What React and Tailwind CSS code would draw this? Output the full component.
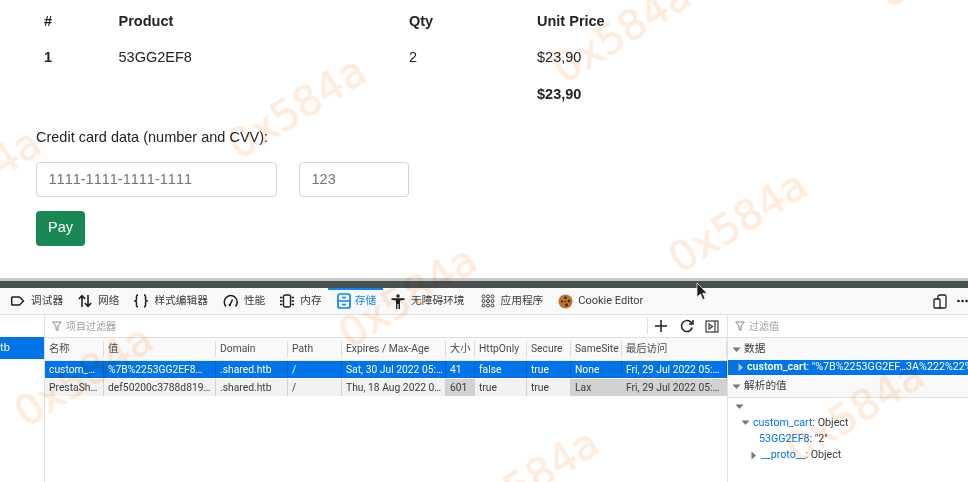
const columns = [
  { name: '名称', width: 'w-[59px]' },
  { name: '值', width: 'w-[112px]' },
  { name: 'Domain', width: 'w-[72px]' },
  { name: 'Path', width: 'w-[54px]' },
  { name: 'Expires / Max-Age', width: 'w-[104px]' },
  { name: '大小', width: 'w-[29px]' },
  { name: 'HttpOnly', width: 'w-[52px]' },
  { name: 'Secure', width: 'w-[44px]' },
  { name: 'SameSite', width: 'w-[51px]' },
  { name: '最后访问', width: 'w-[105px]' },
];

const cookies = [
  ['custom_…', '%7B%2253GG2EF8…', '.shared.htb', '/', 'Sat, 30 Jul 2022 05:…', '41', 'false', 'true', 'None', 'Fri, 29 Jul 2022 05:…'],
  ['PrestaSh…', 'def50200c3788d819…', '.shared.htb', '/', 'Thu, 18 Aug 2022 0…', '601', 'true', 'true', 'Lax', 'Fri, 29 Jul 2022 05:…'],
];

const watermarks = [
  'left-[-28px] top-[180px]',
  'left-[84px] top-[376px]',
  'left-[297px] top-[108px]',
  'left-[408px] top-[297px]',
  'left-[622px] top-[32px]',
  'left-[738px] top-[222px]',
  'left-[855px] top-[412px]',
  'left-[530px] top-[480px]',
  'left-[947px] top-[-43px]',
];

function DebuggerIcon() {
  return (
    <svg className="shrink-0" width="14" height="14" viewBox="0 0 14 14" fill="none" stroke="#1f1f22" strokeWidth="1.5">
      <path d="M1.5 3h7l4 4-4 4h-7a.8.8 0 0 1-.8-.8V3.800A.8.8 0 0 1 1.500 3z" strokeLinejoin="round" />
    </svg>
  );
}

function NetworkIcon() {
  return (
    <svg className="shrink-0" width="14" height="14" viewBox="0 0 14 14" fill="none" stroke="#1f1f22" strokeWidth="1.6">
      <path d="M4 13V2M.8 5 4 1.600 7.200 5M10 1v11M6.800 9l3.200 3.400L13.200 9" />
    </svg>
  );
}

function StyleIcon() {
  return (
    <svg className="shrink-0" width="14" height="14" viewBox="0 0 14 14" fill="none" stroke="#1f1f22" strokeWidth="1.5">
      <path d="M4 1C2 1 2.500 3 2.500 5S2 6.500 1 7c1 .5 1.500 0 1.500 2S2 13 4 13M10 1c2 0 1.500 2 1.500 4S12 6.500 13 7c-1 .5-1.500 0-1.500 2s.5 4-1.500 4" />
    </svg>
  );
}

function GaugeIcon() {
  return (
    <svg className="shrink-0" width="15" height="14" viewBox="0 0 15 14" fill="none" stroke="#1f1f22" strokeWidth="1.5">
      <path d="M3 12.500A6.500 6.500 0 1 1 12.500 12.500" />
      <path d="M7 11 9.500 5.500" />
      <circle cx="6.800" cy="11" r="1.200" fill="#1f1f22" stroke="none" />
    </svg>
  );
}

function MemoryIcon() {
  return (
    <svg className="shrink-0" width="14" height="14" viewBox="0 0 14 14" fill="none" stroke="#1f1f22" strokeWidth="1.300">
      <rect x="3.500" y="1" width="7" height="12" rx="1.500" />
      <path d="M0 3.500h2.500M0 7h2.500M0 10.500h2.500M11.500 3.500H14M11.500 7H14M11.500 10.500H14" />
    </svg>
  );
}

function StorageIcon() {
  return (
    <svg className="shrink-0" width="14" height="16" viewBox="0 0 14 16" fill="none" stroke="#0a84ff" strokeWidth="1.700">
      <rect x="1" y="1" width="12" height="14" rx="2" />
      <path d="M1 8h12M5 4.500h4M5 11.500h4" />
    </svg>
  );
}

function AccessibilityIcon() {
  return (
    <svg className="shrink-0" width="14" height="15" viewBox="0 0 14 15" fill="#1f1f22">
      <circle cx="7" cy="2" r="1.700" />
      <path d="M.5 4.300h13v1.500L9 6.500V15H7.600v-5h-1.200v5H5V6.500L.5 5.800z" />
    </svg>
  );
}

function AppsIcon() {
  const dots = [];
  for (const x of [2.5, 7, 11.5]) {
    for (const y of [2.5, 7, 11.5]) dots.push(<circle key={`${x}-${y}`} cx={x} cy={y} r="1.500" />);
  }
  return (
    <svg className="shrink-0" width="14" height="14" viewBox="0 0 14 14" fill="none" stroke="#3b3b3f" strokeWidth="1">
      {dots}
    </svg>
  );
}

function CookieIcon() {
  return (
    <svg className="shrink-0" width="15" height="15" viewBox="0 0 15 15">
      <circle cx="7.500" cy="7.500" r="7" fill="#b9762e" />
      <circle cx="7.500" cy="3.800" r="1.300" fill="#3a2413" />
      <circle cx="11" cy="7" r="1.300" fill="#3a2413" />
      <circle cx="4" cy="7.500" r="1.100" fill="#3a2413" />
      <circle cx="8.500" cy="11" r="1.400" fill="#3a2413" />
      <circle cx="7.300" cy="7.500" r=".8" fill="#3a2413" />
    </svg>
  );
}

function FilterIcon() {
  return (
    <svg className="shrink-0" width="10" height="11" viewBox="0 0 10 11" fill="none" stroke="#8a8a8e" strokeWidth="1">
      <path d="M.7 1h8.600L6 5v4.500L4 8.500V5z" />
    </svg>
  );
}

function Arrow({ open, color = '#77777c' }) {
  return (
    <svg className="shrink-0" width="9" height="9" viewBox="0 0 9 9" fill={color}>
      {open ? <path d="M.5 2.500h8L4.500 7z" /> : <path d="M2.500.5v8L7 4.500z" />}
    </svg>
  );
}

function Tab({ icon, label, active, latin, className = 'gap-[6px]' }) {
  return (
    <div className={`flex items-center h-full shrink-0 ${className}`}>
      {icon}
      <span className={`${latin ? 'text-[11px]' : 'text-[10.7px]'} ${active ? 'text-[#0a84ff]' : 'text-[#3b3b3f]'}`}>{label}</span>
    </div>
  );
}

function CookieTable() {
  return (
    <div className="flex-1 min-w-0 text-[10.3px]">
      <div className="flex h-[23px] bg-[#f9f9fa] border-b border-[#e8e8e8] items-center">
        {columns.map((col) => (
          <div key={col.name} className={`${col.width} shrink-0 h-[16px] leading-[16px] pl-[4px] border-r border-[#dcdcdc] text-[#4a4a4f] whitespace-nowrap overflow-hidden`}>
            {col.name}
          </div>
        ))}
      </div>
      {cookies.map((row, rowIndex) => (
        <div key={row[0]} className={`flex h-[18px] border-b border-white ${rowIndex === 0 ? 'bg-[#0074e8] text-white' : 'bg-[#f2f2f2] text-[#3b3b3f]'}`}>
          {row.map((cell, i) => {
            const sorted = rowIndex === 1 && (i === 5 || i === 8 || i === 9);
            return (
              <div
                key={i}
                className={`${columns[i].width} shrink-0 leading-[17px] pl-[4px] border-r whitespace-nowrap overflow-hidden ${rowIndex === 0 ? 'border-[#005fc2]' : 'border-[#d0d0d0]'} ${sorted ? 'bg-[#d2d2d2]' : ''}`}
              >
                {cell}
              </div>
            );
          })}
        </div>
      ))}
    </div>
  );
}

function SidePanel() {
  return (
    <div className="w-[241px] shrink-0 border-l border-[#e0e0e1] flex flex-col text-[10.7px]">
      <div className="h-[23px] flex items-center gap-[4px] pl-[7px] border-b border-[#e0e0e1] text-[#a0a0a4] shrink-0">
        <FilterIcon />
        <span className="text-[10px]">过滤值</span>
      </div>
      <div className="h-[22px] flex items-center gap-[3px] pl-[4px] bg-[#f9f9fa] text-[#3b3b3f] shrink-0">
        <Arrow open />
        <span>数据</span>
      </div>
      <div className="h-[15px] flex items-center gap-[2px] pl-[8px] bg-[#0074e8] text-white whitespace-nowrap overflow-hidden shrink-0">
        <Arrow color="#a9cdf5" />
        <span><b className="font-semibold">custom_cart</b>: "%7B%2253GG2EF…3A%222%22%7D"</span>
      </div>
      <div className="h-[23px] flex items-center gap-[3px] pl-[4px] bg-[#f9f9fa] border-b border-[#e0e0e1] text-[#3b3b3f] shrink-0">
        <Arrow open />
        <span>解析的值</span>
      </div>
      <div className="text-[#3b3b3f]">
        <div className="h-[16.4px] flex items-center pl-[7px]"><Arrow open /></div>
        <div className="h-[16.4px] flex items-center pl-[13px] gap-[3px]">
          <Arrow open />
          <span><span className="text-[#0074e8]">custom_cart</span>: Object</span>
        </div>
        <div className="h-[16.4px] flex items-center pl-[31px]">
          <span><span className="text-[#0074e8]">53GG2EF8</span>: "2"</span>
        </div>
        <div className="h-[16.4px] flex items-center pl-[21px] gap-[3px]">
          <Arrow />
          <span><span className="text-[#0074e8]">__proto__</span>: Object</span>
        </div>
      </div>
    </div>
  );
}

export default function App() {
  return (
    <div className="relative w-[968px] h-[482px] overflow-hidden bg-white">
      <div className="h-[278px] pt-[3.5px] px-[36px] font-['Liberation_Sans',sans-serif] text-[14.5px] text-[#212529]">
        <div className="grid grid-cols-[74.5px_290.5px_128px_1fr] auto-rows-[36.5px] items-center w-[650px]">
          <b className="pl-[8px]">#</b>
          <b className="pl-[8px]">Product</b>
          <b className="pl-[8px]">Qty</b>
          <b className="pl-[8px]">Unit Price</b>
          <b className="pl-[8px]">1</b>
          <span className="pl-[8px]">53GG2EF8</span>
          <span className="pl-[8px]">2</span>
          <span className="pl-[8px]">$23,90</span>
          <span />
          <span />
          <span />
          <b className="pl-[8px]">$23,90</b>
        </div>
        <div className="mt-[14.5px] leading-[19px]">Credit card data (number and CVV):</div>
        <div className="flex gap-[22px] mt-[15px]">
          <input readOnly placeholder="1111-1111-1111-1111" className="w-[241px] h-[35px] px-[11.5px] border border-[#ced4da] rounded-[4px] bg-transparent [font-kerning:none] placeholder:text-[#6c757d]" />
          <input readOnly placeholder="123" className="w-[110px] h-[35px] px-[11.5px] border border-[#ced4da] rounded-[4px] bg-transparent [font-kerning:none] placeholder:text-[#6c757d]" />
        </div>
        <button className="mt-[14px] block w-[49px] h-[35px] bg-[#198754] text-white rounded-[4px]">Pay</button>
      </div>

      <div className="h-[3px] bg-[#c8c8c8]" />
      <div className="h-[7px] bg-[#4a5052]" />

      <div className="font-['Roboto','Noto_Sans_CJK_SC',sans-serif] text-[11px]">
        <div className="h-[27px] flex items-center pl-[11px] gap-[15px] bg-[#f9f9fa] border-b border-[#e0e0e1]">
          <Tab icon={<DebuggerIcon />} label="调试器" />
          <Tab icon={<NetworkIcon />} label="网络" />
          <Tab icon={<StyleIcon />} label="样式编辑器" />
          <Tab icon={<GaugeIcon />} label="性能" />
          <Tab icon={<MemoryIcon />} label="内存" />
          <div className="relative h-full flex items-center">
            <div className="absolute left-[-9px] right-[-7px] top-0 h-[2px] bg-[#0a84ff]" />
            <Tab icon={<StorageIcon />} label="存储" active className="gap-[4px]" />
          </div>
          <Tab icon={<AccessibilityIcon />} label="无障碍环境" />
          <Tab icon={<AppsIcon />} label="应用程序" className="gap-[6px] ml-[1px]" />
          <Tab icon={<CookieIcon />} label="Cookie Editor" latin className="gap-[5px]" />
          <div className="ml-auto flex items-center gap-[10px] shrink-0">
            <svg width="14" height="15" viewBox="0 0 14 15" fill="none" stroke="#1f1f22" strokeWidth="1.300">
              <rect x="5" y="1" width="8" height="13" rx="1.500" />
              <rect x="1" y="5" width="6" height="9" rx="1" fill="#f9f9fa" />
            </svg>
            <svg width="11" height="4" viewBox="0 0 11 4" fill="#1f1f22">
              <circle cx="1.500" cy="2" r="1.300" />
              <circle cx="5.500" cy="2" r="1.300" />
              <circle cx="9.500" cy="2" r="1.300" />
            </svg>
          </div>
        </div>

        <div className="flex h-[167px]">
          <div className="w-[45px] shrink-0 border-r border-[#e0e0e1]">
            <div className="h-[22px]" />
            <div className="h-[22px] bg-[#0074e8] text-white leading-[22px] whitespace-nowrap">
              <span className="block ml-[-6px]">htb</span>
            </div>
          </div>
          <div className="flex-1 min-w-0 flex flex-col">
            <div className="h-[23px] flex items-center pl-[7px] gap-[4px] border-b border-[#e0e0e1] text-[#a0a0a4] shrink-0">
              <FilterIcon />
              <span className="flex-1 text-[10px]">项目过滤器</span>
              <div className="flex items-center gap-[11.5px] border-l border-[#e0e0e1] h-[16px] pl-[6px] pr-[8px]">
                <svg width="14" height="14" viewBox="0 0 14 14" stroke="#1f1f22" strokeWidth="1.500"><path d="M7 1v12M1 7h12" /></svg>
                <svg width="14" height="14" viewBox="0 0 14 14" fill="none" stroke="#1f1f22" strokeWidth="1.500">
                  <path d="M12.300 8.500A5.500 5.500 0 1 1 10.500 2.800L12.500 4.500" />
                  <path d="M13 1v4H9" />
                </svg>
                <svg width="14" height="13" viewBox="0 0 14 13" fill="none" stroke="#3b3b3f" strokeWidth="1.200">
                  <rect x="1" y="1" width="12" height="11" />
                  <path d="M10 1v11" />
                  <path d="M4 4v5l3.500-2.500z" />
                </svg>
              </div>
            </div>
            <CookieTable />
          </div>
          <SidePanel />
        </div>
      </div>

      {watermarks.map((pos) => (
        <div
          key={pos}
          className={`absolute ${pos} -translate-x-1/2 -translate-y-1/2 -rotate-[32deg] pointer-events-none mix-blend-multiply font-['DejaVu_Sans',sans-serif] text-[41px] leading-none text-[#ffecdc] [-webkit-text-stroke:0.6px_#ffecdc] whitespace-nowrap`}
        >
          0x584a
        </div>
      ))}

      <svg className="absolute left-[696px] top-[283px] pointer-events-none" width="13" height="18" viewBox="0 0 13 18">
        <path d="M1 0v14l3.500-3 2.300 5.500 2.200-1-2.300-5.300H11z" fill="#1c1c1c" stroke="#fff" strokeWidth=".7" />
      </svg>
    </div>
  );
}
